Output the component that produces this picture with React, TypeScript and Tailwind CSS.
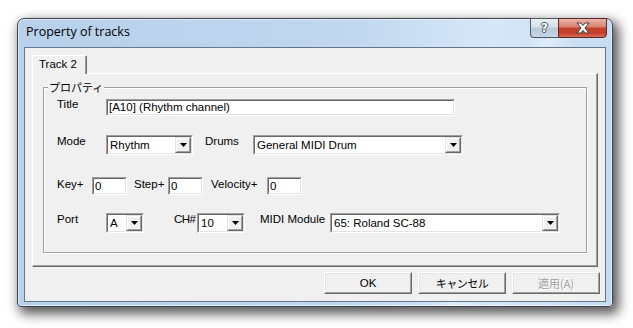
import React from "react";

const sunkenOuter =
  "border border-t-[#a0a0a0] border-l-[#a0a0a0] border-r-white border-b-white";
const sunkenInner =
  "border border-t-[#696969] border-l-[#696969] border-r-[#e3e3e3] border-b-[#e3e3e3]";

function Arrow() {
  return (
    <svg width="7" height="4" viewBox="0 0 7 4">
      <polygon points="0,0 7,0 3.5,4" fill="#000" />
    </svg>
  );
}

function DropBtn() {
  return (
    <div className="w-[16px] h-full flex-none border border-t-[#e3e3e3] border-l-[#e3e3e3] border-r-[#696969] border-b-[#696969]">
      <div className="w-full h-full flex items-center justify-center border border-t-white border-l-white border-r-[#a0a0a0] border-b-[#a0a0a0] bg-[#f0f0f0]">
        <Arrow />
      </div>
    </div>
  );
}

function Combo({ w, text }: { w: string; text: string }) {
  return (
    <div className={`${w} h-[20px] flex-none mt-[1px] ${sunkenOuter}`}>
      <div className={`h-full flex bg-white ${sunkenInner}`}>
        <span className="flex-1 pl-[2px] leading-[16px] whitespace-nowrap overflow-hidden">
          {text}
        </span>
        <DropBtn />
      </div>
    </div>
  );
}

function Edit({ w, h, mt, text }: { w: string; h: string; mt: string; text: string }) {
  return (
    <div className={`${w} ${h} ${mt} flex-none ${sunkenOuter}`}>
      <div className={`h-full bg-white flex items-center pl-[1px] ${sunkenInner}`}>
        <span className="leading-[13px] whitespace-nowrap">{text}</span>
      </div>
    </div>
  );
}

function Label({
  w,
  ml,
  extra,
  children,
}: {
  w: string;
  ml?: string;
  extra?: string;
  children: React.ReactNode;
}) {
  return (
    <span className={`${w} ${ml ?? ""} ${extra ?? ""} flex-none leading-[14px] whitespace-nowrap`}>
      {children}
    </span>
  );
}

function Btn({ children, disabled }: { children: React.ReactNode; disabled?: boolean }) {
  return (
    <div className="w-[88px] h-[22px] border border-t-white border-l-white border-r-[#696969] border-b-[#696969]">
      <div className="w-full h-full border border-t-[#e3e3e3] border-l-[#e3e3e3] border-r-[#a0a0a0] border-b-[#a0a0a0] bg-[#f0f0f0] flex items-center justify-center">
        <span
          className={
            disabled
              ? "text-[#a0a0a0] leading-[14px] text-[11.5px] [text-shadow:1px_1px_0_#fff]"
              : "leading-[14px]"
          }
        >
          {children}
        </span>
      </div>
    </div>
  );
}

export default function App() {
  return (
    <div className="w-[633px] h-[328px] bg-white pl-[17px] pt-[18px] font-['Liberation_Sans','Noto_Sans_CJK_JP',sans-serif] text-[11.5px] text-black">
      <div className="w-[596px] h-[289px] flex flex-col rounded-t-[7px] rounded-b-[4px] border border-[#3b4450] bg-[linear-gradient(110deg,transparent_74%,rgba(255,255,255,0.35)_77%,transparent_81%),linear-gradient(to_right,#b7d0eb,#c0d7ef_55%,#d6e7f7_80%,#c6dbf1)] shadow-[4px_5px_12px_2px_rgba(0,0,0,0.65),inset_0_0_0_1px_rgba(255,255,255,0.55)]">
        {/* title bar */}
        <div className="h-[28px] flex-none flex items-start">
          <div className="flex-1 pl-[8px] pt-[5px] font-['Open_Sans',sans-serif] text-[12.5px] leading-[16px] text-black">
            Property of tracks
          </div>
          <div className="flex -mt-px mr-[5px]">
            <div className="w-[28px] h-[20px] flex items-center justify-center border border-[#4b5866] border-r-0 rounded-bl-[4px] bg-[linear-gradient(to_bottom,#e8eef5,#d4dfea_45%,#b9c9da_52%,#c7d6e5)]">
              <span className="font-['DejaVu_Sans',sans-serif] text-[12px] font-bold leading-[12px] text-white [text-shadow:1px_0_#4a5562,-1px_0_#4a5562,0_1px_#4a5562,0_-1px_#4a5562]">
                ?
              </span>
            </div>
            <div className="w-[49px] h-[20px] flex items-center justify-center border border-[#5a2922] rounded-br-[4px] bg-[linear-gradient(to_bottom,#ebb3a6,#d98473_42%,#c5402d_52%,#c63f2c_78%,#d86c57)]">
              <svg width="14" height="12" viewBox="0 0 14 12">
                <polygon
                  points="1,1 4.8,1 7,3.6 9.2,1 13,1 9,6 13,11 9.2,11 7,8.4 4.8,11 1,11 5,6"
                  fill="#fff"
                  stroke="#3b3b3b"
                  strokeWidth="1"
                  strokeLinejoin="round"
                />
              </svg>
            </div>
          </div>
        </div>
        {/* client area */}
        <div className="mx-[6px] mb-[4px] flex-1 border border-[#66768a] bg-[#f0f0f0] flex flex-col">
          <div className="pl-[7px] pt-[7px] flex">
            <div className="relative z-10 -mb-px w-[55px] h-[19px] bg-[#f0f0f0] border-l border-t border-r border-l-white border-t-white border-r-[#696969] rounded-tl-[2px] rounded-tr-[2px] shadow-[inset_-1px_0_0_#a0a0a0] pl-[6px]">
              <span className="leading-[14px] whitespace-nowrap">Track 2</span>
            </div>
          </div>
          {/* tab panel */}
          <div className="ml-[7px] w-[566px] h-[194px] flex-none border border-t-white border-l-white border-r-[#696969] border-b-[#696969] shadow-[inset_-1px_-1px_0_#a0a0a0]">
            <div className="relative ml-[10px] mt-[13px] w-[544px] h-[166px] border border-[#a0a0a0] shadow-[inset_1px_1px_0_#fff,1px_1px_0_#fff]">
              <span className="absolute left-[4px] -top-[8px] px-[1px] bg-[#f0f0f0] text-[11px] leading-[14px] font-['Noto_Sans_CJK_JP',sans-serif]">
                プロパティ
              </span>
              <div className="flex flex-col pt-[9px] pl-[13px]">
                <div className="flex items-start">
                  <Label w="w-[49px]">Title</Label>
                  <Edit w="w-[349px]" h="h-[17px]" mt="mt-[2px]" text="[A10] (Rhythm channel)" />
                </div>
                <div className="flex items-start mt-[18px]">
                  <Label w="w-[49px]">Mode</Label>
                  <Combo w="w-[87px]" text="Rhythm" />
                  <Label w="w-[48px]" ml="ml-[12px]">Drums</Label>
                  <Combo w="w-[210px]" text="General MIDI Drum" />
                </div>
                <div className="flex items-start mt-[22px]">
                  <Label w="w-[35px]">Key+</Label>
                  <Edit w="w-[35px]" h="h-[18px]" mt="mt-0" text="0" />
                  <Label w="w-[34px]" ml="ml-[7px]">Step+</Label>
                  <Edit w="w-[35px]" h="h-[18px]" mt="mt-0" text="0" />
                  <Label w="w-[56px]" ml="ml-[8px]">Velocity+</Label>
                  <Edit w="w-[35px]" h="h-[18px]" mt="mt-0" text="0" />
                </div>
                <div className="flex items-start mt-[17px]">
                  <Label w="w-[49px]">Port</Label>
                  <Combo w="w-[38px]" text="A" />
                  <Label w="w-[23px]" ml="ml-[30px]" extra="tracking-[-0.5px]">CH#</Label>
                  <Combo w="w-[48px]" text="10" />
                  <Label w="w-[70px]" ml="ml-[15px]">MIDI Module</Label>
                  <Combo w="w-[230px]" text="65: Roland SC-88" />
                </div>
              </div>
            </div>
          </div>
          {/* buttons */}
          <div className="mt-[5px] flex justify-end gap-[6px] pr-[5px]">
            <Btn>OK</Btn>
            <Btn>
              <span className="font-['Noto_Sans_CJK_JP',sans-serif] text-[11px] tracking-[-0.5px]">キャンセル</span>
            </Btn>
            <Btn disabled>
              <span className="font-['Noto_Sans_CJK_JP',sans-serif] text-[11px]">適用(A)</span>
            </Btn>
          </div>
        </div>
      </div>
    </div>
  );
}
